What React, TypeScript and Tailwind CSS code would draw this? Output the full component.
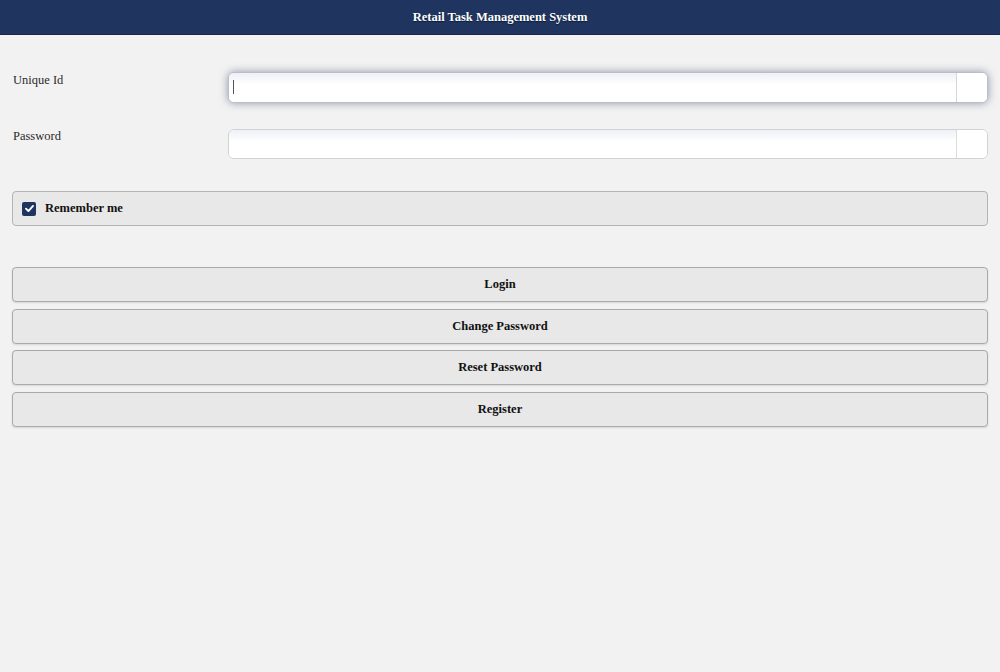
import React, { useState } from 'react';

const serif = { fontFamily: '"Liberation Serif", "Times New Roman", serif' };

export default function App() {
  const [uniqueId, setUniqueId] = useState('');
  const [password, setPassword] = useState('');
  const [remember, setRemember] = useState(true);

  return (
    <div className="min-h-[672px] bg-[#f2f2f2] text-[12.5px] text-[#2b2b2b]" style={serif}>
      {/* Header */}
      <div className="h-[35px] bg-[#1f3560] border-b border-[#17294c] flex items-center justify-center">
        <h1 className="text-white font-bold text-[12.5px] [text-shadow:0_1px_1px_#0b1a33]">
          Retail Task Management System
        </h1>
      </div>

      <div className="px-3 pt-[37px]">
        {/* Unique Id */}
        <div className="flex items-start">
          <label className="w-[216px] leading-[16px] pl-[1px]">Unique Id</label>
          <div className="flex-1 flex h-[31px] rounded-[6px] border border-[#bcbcc4] bg-white shadow-[0_0_8px_rgba(60,72,110,0.55)] overflow-hidden">
            <div className="relative flex-1 bg-gradient-to-b from-[#eef0f7] to-white to-40%">
              <input
                value={uniqueId}
                onChange={e => setUniqueId(e.target.value)}
                className="w-full h-full bg-transparent outline-none px-[5px] text-[12.5px]"
                style={serif}
              />
              {uniqueId === '' && (
                <span className="absolute left-[4px] top-[7px] w-[1px] h-[14px] bg-[#555]" />
              )}
            </div>
            <div className="w-[31px] border-l border-[#d6d6d6] bg-white" />
          </div>
        </div>

        {/* Password */}
        <div className="flex items-start mt-[26px]">
          <label className="w-[216px] leading-[14px] pl-[1px]">Password</label>
          <div className="flex-1 flex h-[30px] rounded-[6px] border border-[#d2d2d2] bg-white overflow-hidden">
            <div className="flex-1 bg-gradient-to-b from-[#eef0f7] to-white to-40%">
              <input
                type="password"
                value={password}
                onChange={e => setPassword(e.target.value)}
                className="w-full h-full bg-transparent outline-none px-[5px] text-[12.5px]"
                style={serif}
              />
            </div>
            <div className="w-[31px] border-l border-[#dcdcdc] bg-white" />
          </div>
        </div>

        {/* Remember me */}
        <label className="mt-[32px] h-[35px] flex items-center rounded-[4px] border border-[#b4b4b4] bg-[#e8e8e8] px-[9px] cursor-pointer">
          <span
            onClick={() => setRemember(!remember)}
            className={`w-[14px] h-[14px] rounded-[2px] flex items-center justify-center ${
              remember ? 'bg-[#1f3560]' : 'bg-white border border-[#999]'
            }`}
          >
            {remember && (
              <svg viewBox="0 0 14 14" className="w-[11px] h-[11px]">
                <path d="M2.5 7.2 L5.6 10.2 L11.5 3.8" fill="none" stroke="white" strokeWidth="2.4" strokeLinecap="round" strokeLinejoin="round" />
              </svg>
            )}
          </span>
          <span className="ml-[9px] font-bold text-[#111]">Remember me</span>
        </label>

        {/* Buttons */}
        <div className="mt-[41px] flex flex-col gap-[6.67px]">
          {['Login', 'Change Password', 'Reset Password', 'Register'].map(label => (
            <button
              key={label}
              className="h-[35px] w-full rounded-[4px] border border-[#aaaaaa] bg-[#e8e8e8] font-bold text-[12.5px] text-[#111] shadow-[0_1px_2px_rgba(0,0,0,0.12)]"
              style={serif}
            >
              {label}
            </button>
          ))}
        </div>
      </div>
    </div>
  );
}
